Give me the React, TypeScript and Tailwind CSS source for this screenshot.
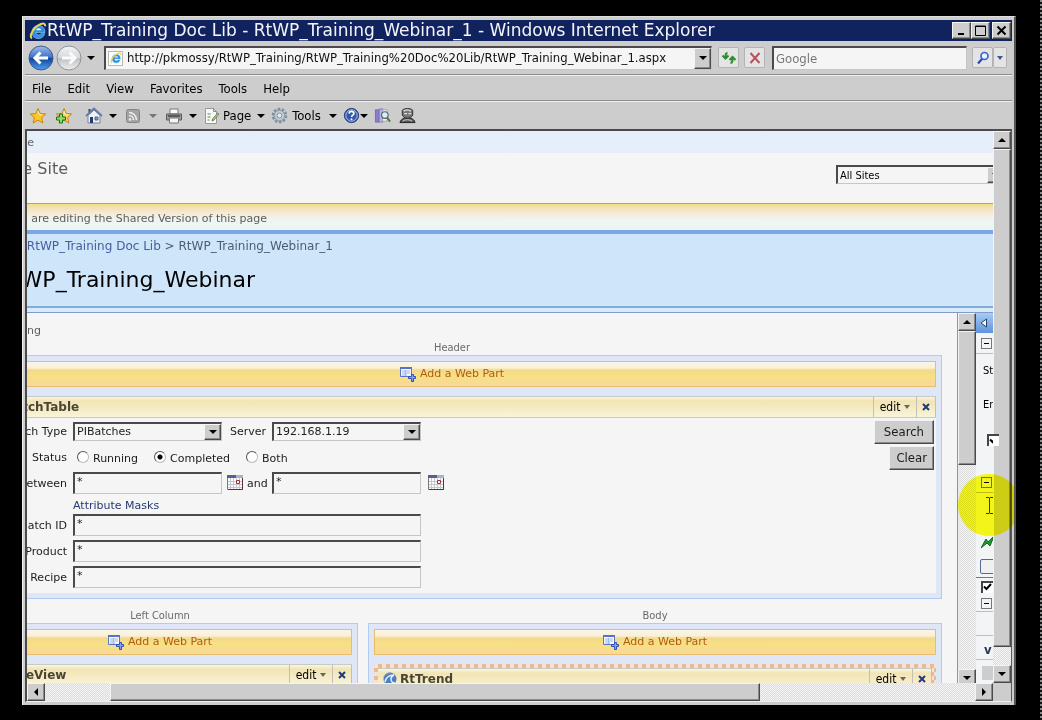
import type { ReactNode } from "react";
import { clsx } from "clsx";

const ui = "font-['DejaVu_Sans_Condensed','Noto_Sans',sans-serif]";
const raised =
  "border border-t-[#f4f4f4] border-l-[#f4f4f4] border-b-[#4a4a4a] border-r-[#4a4a4a] bg-[#cdcdcd] shadow-[inset_-1px_-1px_0_#8a8a8a]";
const sunken =
  "border border-t-2 border-t-[#4a4a4a] border-l-2 border-l-[#4a4a4a] border-r-[#c6c6c6] border-b-[#c6c6c6] bg-[#f5f5f5]";
const hatch =
  "bg-[#f0f0f0] bg-[repeating-conic-gradient(#dcdcdc_0_25%,#f4f4f4_0_50%)] bg-[length:2px_2px]";

type Dir = "up" | "down" | "left" | "right";

const arrowPaths: Record<Dir, string> = {
  up: "M0 6 L4 2 L8 6 Z",
  down: "M0 2 L8 2 L4 6 Z",
  left: "M6 0 L2 4 L6 8 Z",
  right: "M2 0 L6 4 L2 8 Z",
};

function Arrow({ dir = "down", color = "#000" }: { dir?: Dir; color?: string }) {
  return (
    <svg width="8" height="8" viewBox="0 0 8 8" className="shrink-0" aria-hidden="true">
      <path d={arrowPaths[dir]} fill={color} />
    </svg>
  );
}

function ScrollButton({ dir }: { dir: Dir }) {
  return (
    <button
      aria-label={`Scroll ${dir}`}
      className={clsx("flex size-[18px] shrink-0 items-center justify-center", raised)}
    >
      <Arrow dir={dir} />
    </button>
  );
}

function IeIcon({ size }: { size: number }) {
  return (
    <svg width={size} height={size} viewBox="0 0 18 18" className="shrink-0" aria-hidden="true">
      <path
        d="M16 10.500H7c.2 1.600 1.200 2.400 2.700 2.400 1 0 1.800-.4 2.300-1.200h3.700C14.800 14.500 12.600 16.500 9.500 16.500 5.600 16.500 3 13.900 3 10s2.700-6.500 6.500-6.500c4 0 6.500 2.700 6.500 7Z"
        fill="#2f8fe0"
        stroke="#9adcff"
        strokeWidth=".6"
      />
      <path d="M7 8.300h5.200C12 7 11 6.300 9.600 6.300c-1.400 0-2.300.7-2.600 2Z" fill="#e8f6ff" />
      <path
        d="M3 16.500C-.5 14 5 4.500 12 2c3-1 4.500-.3 4 2.300"
        fill="none"
        stroke="#f2d34c"
        strokeWidth="2"
      />
    </svg>
  );
}

function RoundNav({ back }: { back?: boolean }) {
  const id = back ? "nav-back" : "nav-forward";
  return (
    <button aria-label={back ? "Back" : "Forward"} className="size-[26px] shrink-0">
      <svg width="26" height="26" viewBox="0 0 26 26" aria-hidden="true">
        <defs>
          <linearGradient id={id} x1="0" y1="0" x2="0" y2="1">
            <stop offset="0" stopColor={back ? "#9fbdea" : "#f4f4f4"} />
            <stop offset=".48" stopColor={back ? "#3c6fc4" : "#d6d9dd"} />
            <stop offset=".52" stopColor={back ? "#12439c" : "#bcc0c6"} />
            <stop offset="1" stopColor={back ? "#4fa0ec" : "#f0f0f0"} />
          </linearGradient>
        </defs>
        <circle cx="13" cy="13" r="12" fill={`url(#${id})`} stroke={back ? "#3f5c92" : "#8d949e"} />
        <path
          d={back ? "M20 13H7M12.500 7.500L7 13l5.500 5.500" : "M6 13h13M13.500 7.500L19 13l-5.500 5.500"}
          fill="none"
          stroke={back ? "#fff" : "#fafafa"}
          strokeWidth="3"
        />
      </svg>
    </button>
  );
}

function StarIcon({ plus }: { plus?: boolean }) {
  return (
    <svg width="18" height="18" viewBox="0 0 18 18" className="shrink-0" aria-hidden="true">
      <path
        d="M9 1.500l2.200 5 5.500.5-4.100 3.600 1.300 5.400L9 13.200 4.100 16l1.300-5.400L1.300 7l5.500-.5Z"
        fill={plus ? "#f3d65a" : "#ffc62b"}
        stroke="#cf8310"
      />
      <path d="M9 4l1.200 3.500 3 .4" fill="none" stroke="#fff0a8" />
      {plus && (
        <path d="M4.500 7h3v3h3v3h-3v3h-3v-3h-3v-3h3Z" fill="#8fdc6a" stroke="#23701a" />
      )}
    </svg>
  );
}

function HomeIcon() {
  return (
    <svg width="18" height="18" viewBox="0 0 18 18" aria-hidden="true">
      <path d="M3.500 2h2v5h-2z" fill="#3a3f7c" />
      <path d="M3 8.500L9 3l6 5.500V16H3Z" fill="#eef0f4" stroke="#7d8495" />
      <path d="M1 9L9 1.500 17 9" fill="none" stroke="#6a7ba6" strokeWidth="1.800" />
      <path d="M5 10h3v6H5z" fill="#26387c" />
      <path d="M10 10h3v3h-3z" fill="#8fa6cc" stroke="#26387c" strokeWidth=".7" />
    </svg>
  );
}

function FeedIcon() {
  return (
    <svg width="16" height="16" viewBox="0 0 16 16" aria-hidden="true">
      <rect x="1.500" y="1.500" width="13" height="13" rx="2" fill="#a3a3a3" stroke="#858585" />
      <circle cx="5" cy="11.500" r="1.300" fill="#eee" />
      <path d="M4 7.500a4.500 4.500 0 0 1 4.500 4.500M4 4.500a7.500 7.500 0 0 1 7.500 7.500" fill="none" stroke="#eee" strokeWidth="1.500" />
    </svg>
  );
}

function PrinterIcon() {
  return (
    <svg width="18" height="18" viewBox="0 0 18 18" aria-hidden="true">
      <path d="M5 2h8v5H5z" fill="#fafafa" stroke="#777" />
      <path d="M1.500 7h15v6h-15z" fill="#9a9a9a" stroke="#5c5c5c" />
      <path d="M3 9h12" stroke="#444" strokeWidth="1.500" />
      <path d="M4.500 11h9v5h-9z" fill="#f4f4f4" stroke="#777" />
    </svg>
  );
}

function PageIcon() {
  return (
    <svg width="18" height="18" viewBox="0 0 18 18" aria-hidden="true">
      <path d="M2.500 1.500h8l3 3v12h-11Z" fill="#f8f8f8" stroke="#999" />
      <path d="M10.500 1.500v3h3" fill="none" stroke="#888" />
      <path d="M4.500 7h3M4.500 10h3M9 13h2M4.500 13h2" stroke="#4b8b3b" />
      <path d="M16 7l-5 6-2 1 .7-2.300 5-5.700Z" fill="#b6c489" stroke="#66704c" strokeWidth=".8" />
    </svg>
  );
}

function GearIcon() {
  return (
    <svg width="17" height="17" viewBox="0 0 18 18" aria-hidden="true">
      <circle cx="9" cy="9" r="7" fill="none" stroke="#7f8f9c" strokeWidth="2.500" strokeDasharray="2.800 1.600" />
      <circle cx="9" cy="9" r="5.500" fill="#bfcad2" stroke="#8495a2" />
      <circle cx="9" cy="9" r="2.500" fill="#e6eaed" stroke="#8495a2" />
    </svg>
  );
}

function HelpIcon() {
  return (
    <svg width="17" height="17" viewBox="0 0 18 18" aria-hidden="true">
      <circle cx="9" cy="9" r="7.500" fill="#3257b0" stroke="#1f3672" />
      <circle cx="9" cy="9" r="6" fill="none" stroke="#b9cbef" />
      <path d="M6.500 7c.2-3.200 5.200-3 5 0-.1 1.600-2.400 1.700-2.400 3.500" fill="none" stroke="#fff" strokeWidth="1.800" />
      <circle cx="9" cy="13" r="1.100" fill="#fff" />
    </svg>
  );
}

function ResearchIcon() {
  return (
    <svg width="17" height="17" viewBox="0 0 18 18" aria-hidden="true">
      <path d="M1.500 3h4v13h-4z" fill="#8a7fc8" stroke="#6a60a8" strokeWidth=".8" />
      <path d="M5.500 2h4v14h-4z" fill="#b9b2e0" stroke="#7a70b8" strokeWidth=".8" />
      <path d="M9 3h5v12H9z" fill="#f2f2f2" stroke="#999" strokeWidth=".8" />
      <circle cx="11.500" cy="8.500" r="3.500" fill="#dcecf2" stroke="#4b6670" strokeWidth="1.200" />
      <path d="M14 11.500l3 4" stroke="#4b7a42" strokeWidth="2" />
    </svg>
  );
}

function PersonIcon() {
  return (
    <svg width="17" height="17" viewBox="0 0 18 18" aria-hidden="true">
      <path d="M1 16.500c.5-3 3-4 5-5h6c2 1 4.500 2 5 5Z" fill="#555" stroke="#222" />
      <path d="M3.500 3.500c2-2.500 9-2.500 11 0v5c-2 4.500-9 4.500-11 0Z" fill="#777" stroke="#2c2c2c" />
      <path d="M5 4.500c1.500-2 6-2 7.500 0M5.500 7h3M10 7h3" fill="none" stroke="#e0e0e0" strokeWidth="1.500" />
      <path d="M4 15c1.500-2 8-2 10 0" fill="none" stroke="#ddd" />
    </svg>
  );
}

function CalendarIcon() {
  return (
    <svg width="16" height="16" viewBox="0 0 16 16" aria-hidden="true">
      <path d="M.5.5h15v14H.5z" fill="#fafafa" stroke="#7d7480" />
      <path d="M0 0h16v3H0z" fill="#5d5a94" />
      <path d="M9 0h7v3H9z" fill="#aab0ce" />
      <path d="M3.500 3v12M6.500 3v12M9.500 3v12M12.500 3v12M1 6.500h14M1 9.500h14M1 12.500h14" stroke="#c6c6ce" />
      <path d="M9.500 5.500h3v3h-3z" fill="#fff" stroke="#9c3440" />
      <path d="M15.500 3v11.500H1" fill="none" stroke="#5e3038" />
    </svg>
  );
}

function AddPartIcon() {
  return (
    <svg width="16" height="16" viewBox="0 0 16 16" className="shrink-0" aria-hidden="true">
      <path d="M.5 1.500h11v9H.5z" fill="#f4f8ff" stroke="#5876c4" />
      <path d="M0 1h12v2H0z" fill="#5573cc" />
      <path d="M2 5h8M2 7h8M2 9h5M5.500 4v6" stroke="#a4b9e6" />
      <path d="M11.500 8.500h2v2h2v2h-2v3h-2v-3h-3v-2h3Z" fill="#7fa2ff" stroke="#3350b4" />
    </svg>
  );
}

function PartIcon() {
  return (
    <svg width="16" height="16" viewBox="0 0 16 16" className="shrink-0" aria-hidden="true">
      <circle cx="8" cy="8" r="6.500" fill="#4a7fc4" />
      <path d="M3 11C4 6 7 4 12 4c-2 1-3 2-3 4 0 3 2 4 4 4" fill="none" stroke="#e4ecf4" strokeWidth="1.500" />
      <path d="M2 6c1-3 4-4 7-4" fill="none" stroke="#7e96b4" />
    </svg>
  );
}

function TitleBar() {
  return (
    <header className="flex h-[21px] shrink-0 items-center bg-[#11235f] pr-px pl-1 text-[#f4f4f8]">
      <IeIcon size={18} />
      <h1 className="flex-1 truncate font-['DejaVu_Sans',sans-serif] text-[17px] leading-[21px]">
        RtWP_Training Doc Lib - RtWP_Training_Webinar_1 - Windows Internet Explorer
      </h1>
      <div className="flex">
        <button aria-label="Minimize" className={clsx("flex h-[17px] w-[19px] items-center justify-center", raised)}>
          <svg width="11" height="11" viewBox="0 0 11 11"><path d="M2 9h6" stroke="#000" strokeWidth="2" /></svg>
        </button>
        <button aria-label="Maximize" className={clsx("mr-0.5 flex h-[17px] w-[19px] items-center justify-center", raised)}>
          <svg width="11" height="11" viewBox="0 0 11 11"><path d="M.5 1h10v9.500H.5zM.5 1.500h10" fill="none" stroke="#000" /></svg>
        </button>
        <button aria-label="Close" className={clsx("flex h-[17px] w-[19px] items-center justify-center", raised)}>
          <svg width="11" height="11" viewBox="0 0 11 11"><path d="M1.500 1.500l8 8M9.500 1.500l-8 8" stroke="#000" strokeWidth="2" /></svg>
        </button>
      </div>
    </header>
  );
}

function AddressRow() {
  const chip = "flex h-[21px] items-center justify-center rounded-xs border border-[#b4b4b4] bg-[#e4e4e4]";
  return (
    <div className="flex h-[34px] shrink-0 items-center border-b border-[#8c8c8c] pr-[5px] pl-[3px]">
      <RoundNav back />
      <div className="ml-0.5 flex items-center">
        <RoundNav />
      </div>
      <button aria-label="Recent pages" className="flex w-[18px] justify-center">
        <Arrow />
      </button>
      <div className={clsx("ml-1 flex h-[24px] flex-1 items-center pl-0.5", sunken)}>
        <span className="mr-1 flex size-[15px] items-center justify-center border border-[#b8b8b8] bg-white">
          <IeIcon size={12} />
        </span>
        <input
          aria-label="Address"
          className={clsx("min-w-0 flex-1 bg-transparent text-[13px] text-[#111] outline-none", ui)}
          defaultValue="http://pkmossy/RtWP_Training/RtWP_Training%20Doc%20Lib/RtWP_Training_Webinar_1.aspx"
        />
        <button aria-label="Show addresses" className={clsx("flex h-full w-[17px] items-center justify-center", raised)}>
          <Arrow />
        </button>
      </div>
      <button aria-label="Refresh" className={clsx("ml-1.5 w-[21px]", chip)}>
        <svg width="16" height="16" viewBox="0 0 16 16">
          <path d="M6.500 3C4.500 3 4.500 5 4.500 8M1.500 5.500L4.500 8.500l3-3M9.500 13c2 0 2-2 2-5M8.500 10l3-3 3 3" fill="none" stroke="#2f8a34" strokeWidth="2" />
        </svg>
      </button>
      <button aria-label="Stop" className={clsx("ml-[5px] w-[21px]", chip)}>
        <svg width="14" height="14" viewBox="0 0 14 14">
          <path d="M2.500 2l9 10M11.500 2l-9 10" stroke="#b9525c" strokeWidth="2" />
        </svg>
      </button>
      <input
        aria-label="Search"
        placeholder="Google"
        className={clsx("ml-[7px] h-[24px] w-[195px] pl-0.5 text-[13px] placeholder:text-[#777] outline-none", sunken, ui)}
      />
      <div className="ml-[5px] flex">
        <button aria-label="Run search" className={clsx("w-[21px]", chip)}>
          <svg width="14" height="14" viewBox="0 0 14 14">
            <circle cx="8.500" cy="5" r="3.500" fill="#e6f2ff" stroke="#3a62d0" strokeWidth="1.700" />
            <path d="M6 8l-4 4.500" stroke="#2948b4" strokeWidth="2.200" />
          </svg>
        </button>
        <button aria-label="Search options" className={clsx("w-[14px]", chip)}>
          <svg width="6" height="4" viewBox="0 0 6 4"><path d="M0 0h6L3 4Z" fill="#3d5c8c" /></svg>
        </button>
      </div>
    </div>
  );
}

function MenuBar() {
  return (
    <nav className={clsx("flex h-[26px] shrink-0 items-center gap-4 border-t border-b border-t-[#f0f0f0] border-b-[#8c8c8c] px-[7px] pt-px text-[13px]", ui)}>
      {["File", "Edit", "View", "Favorites", "Tools", "Help"].map((item) => (
        <button key={item}>{item}</button>
      ))}
    </nav>
  );
}

function ToolBar() {
  const item = "flex items-center";
  return (
    <div className={clsx("flex h-[28px] shrink-0 items-center border-t border-[#f0f0f0] pl-1 text-[13px]", ui)}>
      <button aria-label="Favorites Center" className={item}><StarIcon /></button>
      <button aria-label="Add to Favorites" className={clsx("ml-2", item)}><StarIcon plus /></button>
      <button aria-label="Home" className={clsx("ml-3 gap-1.5", item)}><HomeIcon /><Arrow /></button>
      <button aria-label="Feeds" className={clsx("ml-2 gap-2", item)}><FeedIcon /><Arrow color="#777" /></button>
      <button aria-label="Print" className={clsx("ml-2 gap-1.5", item)}><PrinterIcon /><Arrow /></button>
      <button className={clsx("ml-1.5 gap-0.5", item)}>
        <PageIcon />
        <span>Page</span>
        <span className="ml-1"><Arrow /></span>
      </button>
      <button className={clsx("ml-1.5 gap-1", item)}>
        <GearIcon />
        <span>Tools</span>
        <span className="ml-1"><Arrow /></span>
      </button>
      <button aria-label="Help" className={clsx("ml-1.5", item)}><HelpIcon /><Arrow /></button>
      <button aria-label="Research" className={clsx("ml-1.5", item)}><ResearchIcon /></button>
      <button aria-label="Messenger" className={clsx("ml-2", item)}><PersonIcon /></button>
    </div>
  );
}

function Select({ id, label, value, className }: { id: string; label?: string; value: string; className: string }) {
  return (
    <div className={clsx("relative h-[19px]", className)}>
      <select id={id} aria-label={label} className={clsx("h-full w-full appearance-none rounded-none pl-0.5 leading-none outline-none", sunken)}>
        <option>{value}</option>
      </select>
      <span className={clsx("pointer-events-none absolute top-0.5 right-px bottom-px flex w-[17px] items-center justify-center", raised)}>
        <Arrow />
      </span>
    </div>
  );
}

function AddWebPart() {
  return (
    <button className="flex h-[26px] w-full items-center justify-center gap-1 border border-[#e8bd6c] bg-[linear-gradient(#fbf4ea_0,#f9f0d8_6px,#f3d98c_8px,#f7e083_14px,#f8d999_23px)] text-[11px] text-[#b25d0e]">
      <AddPartIcon />
      Add a Web Part
    </button>
  );
}

function Zone({ title, className, children }: { title: string; className?: string; children: ReactNode }) {
  return (
    <section className={clsx("flex flex-col", className)}>
      <h3 className={clsx("h-4 text-center text-[11px] leading-[18px] text-[#6a6a6a]", ui)}>{title}</h3>
      <div className="flex-1 border border-[#b3cbee] bg-[#dfe7f6] p-[5px]">
        <AddWebPart />
        <div className="mt-[9px]">{children}</div>
      </div>
    </section>
  );
}

function PartHeader({ title }: { title: string }) {
  return (
    <div className="flex h-[22px] items-stretch border-t border-b border-t-[#c3cdc6] border-b-[#c9c9c0] bg-[linear-gradient(#fbf5e4_0,#f2e4b4_4px,#f6ebc4_12px,#f8f5da_20px)]">
      <div className="flex flex-1 items-center gap-0.5 pl-1">
        <PartIcon />
        <h4 className="text-xs font-bold text-[#4a4634]">{title}</h4>
      </div>
      <button className={clsx("flex w-[43px] items-center justify-center gap-1 border-l border-[#c0c0b4] text-xs", ui)}>
        edit
        <svg width="6" height="4" viewBox="0 0 6 4"><path d="M0 0h6L3 4Z" fill="#666" /></svg>
      </button>
      <button aria-label={`Close ${title}`} className="flex w-5 items-center justify-center border-x border-[#c0c0b4]">
        <svg width="8" height="8" viewBox="0 0 8 8"><path d="M1 1l6 6M7 1L1 7" stroke="#22397c" strokeWidth="2" /></svg>
      </button>
    </div>
  );
}

function FieldRow({ label, htmlFor, children }: { label: string; htmlFor?: string; children: ReactNode }) {
  return (
    <div className="flex h-[26px] items-center">
      <label htmlFor={htmlFor} className="mr-1.5 w-[99px] pt-0.5 text-right whitespace-nowrap">{label}</label>
      {children}
    </div>
  );
}

function StatusRadio({ name, checked }: { name: string; checked?: boolean }) {
  return (
    <label className="flex items-center gap-1 pt-1">
      <input
        type="radio"
        name="status"
        defaultChecked={checked}
        className="mb-1 size-3 appearance-none rounded-full border border-t-[#555] border-l-[#555] border-r-[#bbb] border-b-[#bbb] bg-white checked:bg-[radial-gradient(#000_0_2px,#fff_3px)]"
      />
      {name}
    </label>
  );
}

function BatchForm() {
  const field = clsx("h-[22px] px-0.5 pb-1 outline-none", sunken);
  const push = clsx("text-[13px] leading-[22px]", raised, ui);
  return (
    <div className="flex bg-[#f5f5f5] pr-0.5 pb-[3px] text-[11px] text-[#1c1c1c]">
      <form className="flex-1">
        <FieldRow label="Batch Type" htmlFor="batch-type">
          <Select id="batch-type" value="PIBatches" className="w-[149px]" />
          <label htmlFor="server" className="w-[50px] pt-0.5 pl-2">Server</label>
          <Select id="server" value="192.168.1.19" className="w-[149px]" />
        </FieldRow>
        <FieldRow label="Status">
          <div className="flex gap-4 pl-1">
            <StatusRadio name="Running" />
            <StatusRadio name="Completed" checked />
            <StatusRadio name="Both" />
          </div>
        </FieldRow>
        <FieldRow label="Between" htmlFor="from">
          <input id="from" defaultValue="*" className={clsx("w-[149px]", field)} />
          <button type="button" aria-label="Pick start date" className="ml-[5px]"><CalendarIcon /></button>
          <label htmlFor="to" className="w-[29px] pt-0.5 pl-1">and</label>
          <input id="to" defaultValue="*" className={clsx("w-[149px]", field)} />
          <button type="button" aria-label="Pick end date" className="ml-[7px]"><CalendarIcon /></button>
        </FieldRow>
        <a href="#masks" className="ml-[105px] block h-4 leading-5 text-[#243a70]">Attribute Masks</a>
        {["Batch ID", "Product", "Recipe"].map((name) => (
          <FieldRow key={name} label={name} htmlFor={name}>
            <input id={name} defaultValue="*" className={clsx("w-[348px]", field)} />
          </FieldRow>
        ))}
      </form>
      <div className="flex flex-col items-end gap-0.5 pt-0.5">
        <button className={clsx("px-[9px]", push)}>Search</button>
        <button className={clsx("px-[6px]", push)}>Clear</button>
      </div>
    </div>
  );
}

function MinusBox({ name }: { name: string }) {
  return (
    <button aria-label={name} className="flex size-[11px] shrink-0 items-center justify-center border border-[#777]">
      <span className="h-px w-[5px] bg-black" />
    </button>
  );
}

function ToolCheck({ name }: { name: string }) {
  return (
    <label className="block size-3 shrink-0">
      <input type="checkbox" defaultChecked aria-label={name} className="peer absolute size-3 appearance-none border-t-2 border-l-2 border-[#444] bg-white" />
      <svg width="12" height="12" viewBox="0 0 12 12" className="pointer-events-none relative">
        <path d="M3 5.500L5.500 8 10 3" fill="none" stroke="#000" strokeWidth="2" />
      </svg>
    </label>
  );
}

function ToolPane() {
  return (
    <aside className={clsx("flex w-[17px] shrink-0 flex-col overflow-hidden bg-[#f3f4f6] text-[11px]", ui)}>
      <button aria-label="Expand pane" className="flex h-5 shrink-0 items-center bg-linear-to-b from-[#a9cbf3] to-[#5d92dc] pl-1">
        <svg width="8" height="10" viewBox="0 0 8 10"><path d="M6.500 1v8L1 5Z" fill="#fff" stroke="#26406e" /></svg>
      </button>
      <div className="flex h-[21px] shrink-0 items-center border-b border-[#bcbcbc] pl-[5px]"><MinusBox name="Collapse appearance" /></div>
      <div className="flex h-[34px] shrink-0 items-center pl-[7px]">St</div>
      <div className="flex h-[34px] shrink-0 items-center pl-[7px]">Er</div>
      <div className="flex h-[36px] shrink-0 items-center pl-[11px]"><ToolCheck name="Enabled" /></div>
      <div className="flex h-[35px] shrink-0 items-end border-b border-[#bcbcbc] pb-1 pl-[5px]"><MinusBox name="Collapse layout" /></div>
      <div className="flex h-[66px] shrink-0 items-end pb-2.5 pl-[5px]">
        <svg width="14" height="14" viewBox="0 0 14 14" className="shrink-0">
          <path d="M0 13L5 4l2 3 6-6-4 10-3-3Z" fill="#1f9a2f" stroke="#0e6a1c" />
        </svg>
      </div>
      <div className="flex h-[19px] shrink-0 items-start border-b border-[#777] pl-1">
        <button aria-label="Browse" className="h-[15px] w-5 shrink-0 rounded-xs border border-[#536a94] bg-[#f0f0f0]" />
      </div>
      <div className="flex h-[17px] shrink-0 items-center pl-[5px]"><ToolCheck name="Visible" /></div>
      <div className="flex h-[17px] shrink-0 items-center border-b border-[#bcbcbc] pl-[5px]"><MinusBox name="Collapse advanced" /></div>
      <div className="h-6 shrink-0 border-b border-[#bcbcbc]" />
      <div className="flex h-[24px] shrink-0 items-center border-b border-[#bcbcbc] pt-1 pl-2 text-[13px] font-bold text-[#2c3a58]">v</div>
      <div className="mt-1.5 ml-1.5 h-3.5 shrink-0 bg-[#cdcdcd]" />
    </aside>
  );
}

function SitePage() {
  return (
    <main className="flex min-w-0 flex-1 flex-col overflow-hidden bg-[#f5f5f5] font-['DejaVu_Sans',sans-serif]">
      <div className="h-[22px] shrink-0 bg-linear-to-b from-[#e2eff8] to-[#e8eefa] text-[11px] leading-6 text-[#666]">
        <p className="-ml-8 w-[39px] text-right">Home</p>
      </div>
      <div className="flex h-[50px] shrink-0 justify-between">
        <h2 className="-ml-14 w-[97px] pt-1 text-right text-base leading-6 whitespace-nowrap text-[#5c5c5c]">Home Site</h2>
        <div className={clsx("mt-3 -mr-3 text-[11px]", ui)}>
          <Select id="scope" label="Search scope" value="All Sites" className="w-[169px]" />
        </div>
      </div>
      <div className="h-[27px] shrink-0 border-t border-[#8fa3cc] bg-[linear-gradient(#efe080_0,#f4deb0_3px,#f4ead6_9px,#eef5f2_16px,#eaf7f4_26px)] text-[11px] leading-[29px] text-[#5c5c5c]">
        <p className="-ml-20 w-[320px] text-right whitespace-nowrap">You are editing the Shared Version of this page</p>
      </div>
      <div className="h-[78px] shrink-0 border-t-4 border-b-2 border-t-[#7ea5e4] border-b-[#86a9de] bg-[#cfe6fa] pt-1">
        <p className="-ml-20 w-[386px] text-right text-xs leading-4 whitespace-nowrap text-[#4d5c74]">
          <a href="#home" className="text-[#45609c]">Home</a> &gt; <a href="#lib" className="text-[#45609c]">RtWP_Training Doc Lib</a> &gt; RtWP_Training_Webinar_1
        </p>
        <h2 className="-ml-10 w-[268px] pt-1.5 text-right text-[22px] leading-10 text-black">RtWP_Training_Webinar</h2>
      </div>
      <div className="h-1 shrink-0 bg-[#d9ebfb]" />
      <div className="flex min-h-0 flex-1 border-t border-[#7f9cc8]">
        <div className="min-w-0 flex-1 overflow-hidden">
          <div className="-ml-[65px] pr-[15px]">
            <p className="h-[26px] w-[79px] pt-2 text-right text-[11px] leading-5 text-[#5c5c5c]">Training</p>
            <Zone title="Header">
              <PartHeader title="RtBatchTable" />
              <BatchForm />
            </Zone>
            <div className="mt-2 flex h-[100px] gap-2.5">
              <Zone title="Left Column" className="w-[396px]">
                <PartHeader title="RtTreeView" />
              </Zone>
              <Zone title="Body" className="flex-1">
                <div className="bg-[repeating-conic-gradient(#ecba8c_0_25%,#f1e2da_0_50%)] bg-[length:8px_8px] p-1">
                  <PartHeader title="RtTrend" />
                </div>
              </Zone>
            </div>
          </div>
        </div>
        <div className={clsx("flex w-[19px] shrink-0 flex-col overflow-hidden border-l border-[#7d98b4]", hatch)}>
          <ScrollButton dir="up" />
          <div className={clsx("h-[134px]", raised)} />
          <div className="flex-1" />
          <div className="-mb-1"><ScrollButton dir="down" /></div>
        </div>
        <ToolPane />
      </div>
    </main>
  );
}

export default function App() {
  return (
    <div className="flex h-screen bg-black">
      <div className="min-w-0 flex-1 pt-4 pr-6 pb-[15px] pl-[22px]">
        <div className="relative flex h-full flex-col overflow-hidden border-t border-r-2 border-l border-t-[#dedede] border-r-[#555] border-l-[#f0f0f0] bg-[#cdcdcd] pt-[3px] pr-0.5 pb-[3px] pl-0.5 text-black">
          <TitleBar />
          <AddressRow />
          <MenuBar />
          <ToolBar />
          <div className="flex min-h-0 flex-1 flex-col border-t-2 border-r border-b border-l-2 border-t-[#4a4a4a] border-r-[#5a5a5a] border-b-[#f0f0f0] border-l-[#4a4a4a]">
            <div className="flex min-h-0 flex-1">
              <SitePage />
              <div className={clsx("flex w-[18px] shrink-0 flex-col", hatch)}>
                <ScrollButton dir="up" />
                <div className={clsx("min-h-0 flex-1", raised)} />
                <div className="h-[18px] shrink-0" />
                <ScrollButton dir="down" />
              </div>
            </div>
            <div className="flex h-[18px] shrink-0">
              <div className={clsx("flex flex-1", hatch)}>
                <ScrollButton dir="left" />
                <div className="flex-[65]" />
                <div className={clsx("flex-[650]", raised)} />
                <div className="flex-[215]" />
                <ScrollButton dir="right" />
              </div>
              <div className="w-[18px] bg-[#cdcdcd]" />
            </div>
          </div>
          {/* pointer highlight */}
          <div className="pointer-events-none absolute top-[457px] -right-1.5 flex size-[62px] items-center justify-center rounded-full bg-[#ffff00] opacity-90 mix-blend-multiply">
            <svg width="9" height="17" viewBox="0 0 9 17">
              <path d="M1 .5h3l.5 1 .5-1h3M4.500 1v15M1 16.500h3l.5-1 .5 1h3" fill="none" stroke="#222" />
            </svg>
          </div>
        </div>
      </div>
      <div className="w-0.5 bg-[repeating-linear-gradient(#8a8a8a_0_2px,#111_2px_4px)]" />
    </div>
  );
}
